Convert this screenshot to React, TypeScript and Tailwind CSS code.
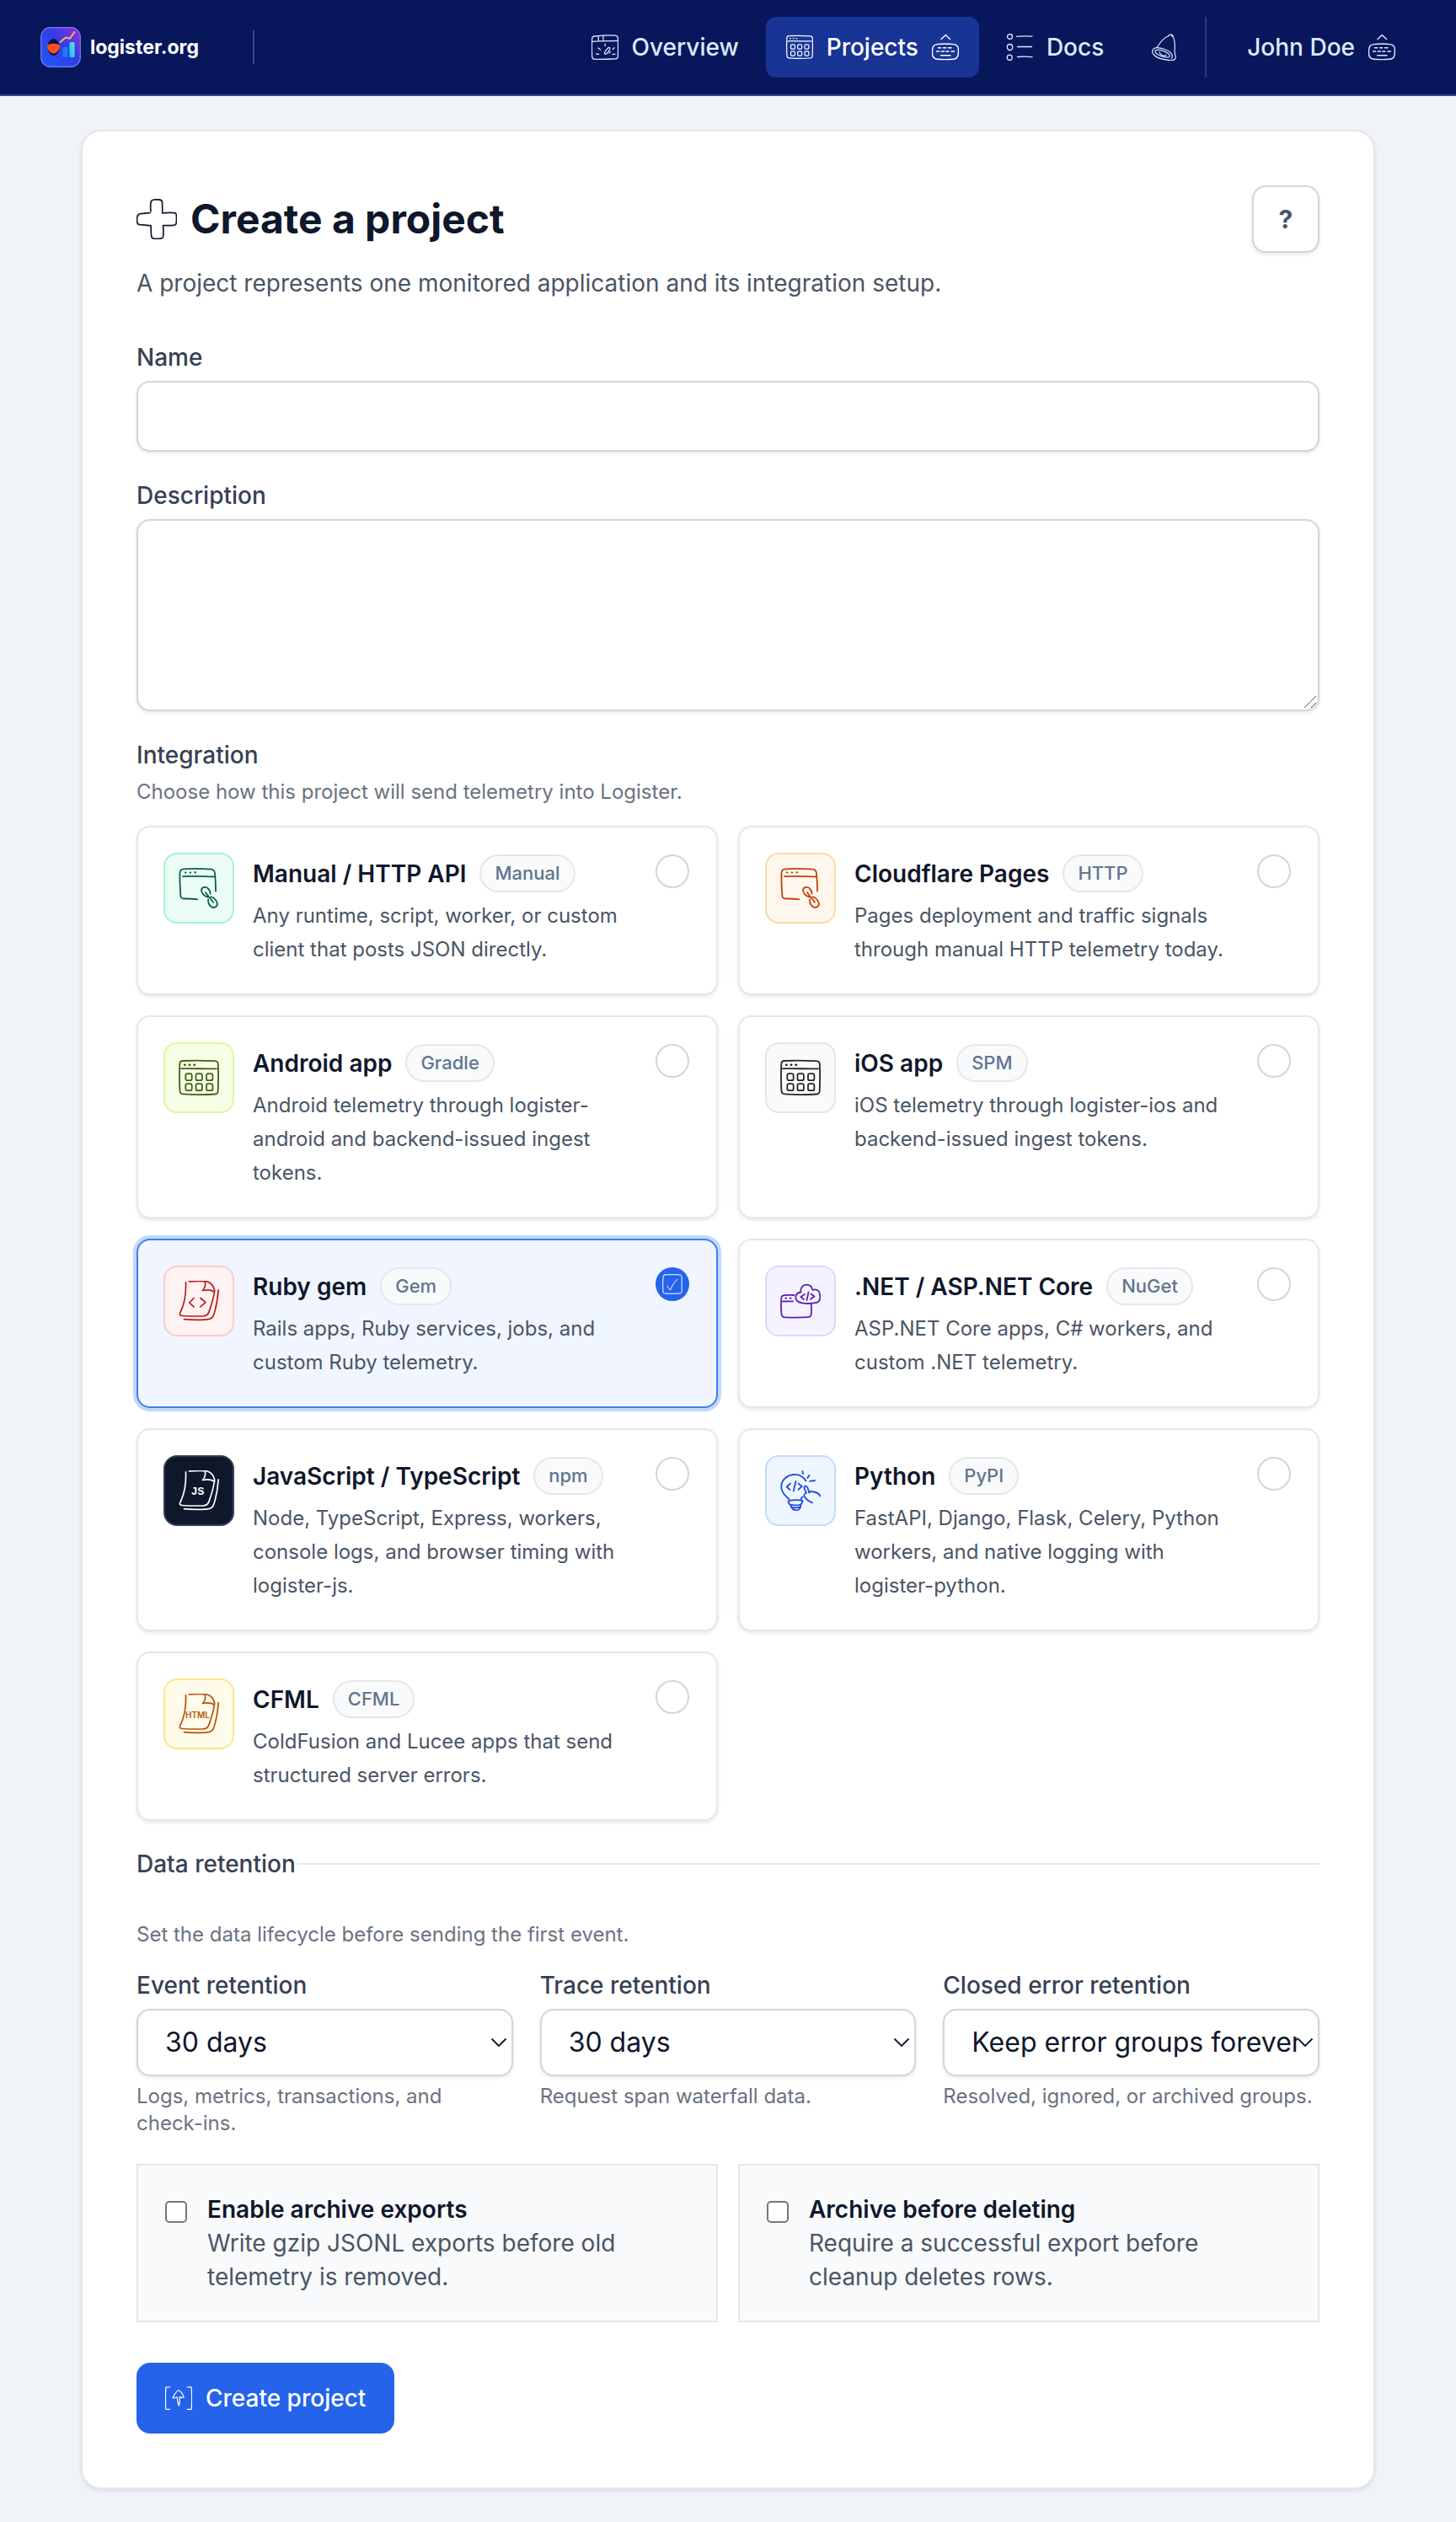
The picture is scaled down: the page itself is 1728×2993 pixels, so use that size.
// New project page: top navigation + project form

import { useState } from 'react';
import type { ReactNode } from 'react';

type IconProps = { className?: string };

// --- Icons (hand-drawn line set) ---

const Icon = ({ box, width, className, children }: {
  box: number;
  width: number;
  className?: string;
  children: ReactNode;
}) => (
  <svg
    viewBox={`0 0 ${box} ${box}`}
    fill="none"
    stroke="currentColor"
    strokeWidth={width}
    strokeLinecap="round"
    strokeLinejoin="round"
    className={className}
    aria-hidden="true"
  >
    {children}
  </svg>
);

const OverviewIcon = ({ className }: IconProps) => (
  <Icon box={32} width={1.3} className={className}>
    <path d="M3 3C12 2 21 1.3 28.5 2.2c2 .3 2.7 1.2 2.8 3 .3 7.5.3 15 0 22-.1 1.8-.9 2.5-2.7 2.6C20 30.1 11 30.6 4 30.3 1.8 30.2.8 29.3.7 27.2.3 20 .4 12 .6 6 .7 4.200 1.300 3.200 3 3z" />
    <path d="M.8 9.300C11 8.300 21 8.800 31 8.400M8.200 3v6M14.200 2.500c-.6 2-.6 4 0 6" />
    <path d="M8 17l2.700 2M16 12.200l.3 2.300M25.300 18.500l1.700-1.800M5.700 24l3 .3M25 24.300h3M21 22.800l1.500-1" />
    <ellipse cx="18.700" cy="20.300" rx="1.700" ry="4.600" transform="rotate(36 18.700 20.300)" />
  </Icon>
);

const AppGridIcon = ({ className }: IconProps) => (
  <Icon box={48} width={1.800} className={className}>
    <path d="M4 4c13-.6 26-.4 39 .2 2.300.2 3.700 1 3.800 3.500.6 11 .3 22-.1 32-.1 2.600-1.200 3.600-3.600 3.800-13 1-26 .9-38-.1-2.500-.2-3.400-1.200-3.600-3.700C.7 29 .9 18 1.300 8 1.400 5.300 2 4.200 4 4z" />
    <path d="M3 13.200c14-.5 28 .5 42 .1" />
    <path d="M7 8.700h.6M12.700 8.700h.6M18.400 8.700h.6" strokeWidth="2.400" />
    <rect x="8.300" y="19.200" width="7.400" height="8" rx="2" />
    <rect x="20.500" y="19.200" width="7.400" height="8" rx="2" />
    <rect x="33" y="19.200" width="7.400" height="8" rx="2" />
    <rect x="8.300" y="31.200" width="7.400" height="8" rx="2" />
    <rect x="20.500" y="31.200" width="7.400" height="8" rx="2" />
    <rect x="33" y="31.200" width="7.400" height="8" rx="2" />
  </Icon>
);

const KeyboardIcon = ({ className }: IconProps) => (
  <Icon box={32} width={1.400} className={className}>
    <path d="M11 6.600l5.300-5.100 5.300 5.100" />
    <path d="M6 12.600c6.700-.7 13.500-.7 20 0 3.500.5 5.300 2.300 5.400 6 0 1.600 0 3.400-.1 5-.3 4.400-1.900 6.300-6 6.600-6.300.5-12.700.5-18.700 0C2.300 29.800.8 28.200.6 24.400c-.1-1.800-.1-3.700 0-5.500.2-3.700 1.700-5.800 5.400-6.300z" />
    <path d="M7.500 16.700h3.200M13.500 16.700h3.200M19.500 16.700h3.500M5.500 21h3M11 21h3.500M16.700 21h3.200M23 21h3.500M10.500 25.700h11.500" />
  </Icon>
);

const DocsIcon = ({ className }: IconProps) => (
  <Icon box={32} width={1.300} className={className}>
    <ellipse cx="4.500" cy="3.500" rx="3" ry="2.900" />
    <ellipse cx="4.500" cy="16" rx="3.200" ry="3.500" />
    <ellipse cx="4.200" cy="28.300" rx="3" ry="3.200" />
    <path d="M12.500 3.300c6-.6 12-.4 18.500-.2M13.500 15.500h17M13.500 27.500c6-.5 12-.5 17.500.1" />
  </Icon>
);

const BellIcon = ({ className }: IconProps) => (
  <Icon box={32} width={1.200} className={className}>
    <path d="M20.500 3C13.500 5 10.500 11.500 7 16.500M26.300 3.500c2.500 4.500 2.200 11 1.800 17.500-.1 3 1.200 4.500 1.200 7.500-.6 2.300-2.500 3.300-6.300 3.200C15 31 6.500 28.500 3.300 25c-1.600-2-2.200-4.500-1-6.300" />
    <path d="M3 18c2-1.600 7.500-1.500 12.700.3 5.500 2 9.800 5 9.800 8.500-.1 1.200-.6 2-1.500 2.400" />
    <path d="M20.500 3c.5-2.300 5-2.800 5.800.5M23.800.9l1.400 2.300" />
    <ellipse cx="13.500" cy="23.500" rx="9.300" ry="3.300" transform="rotate(20 13.500 23.500)" />
    <path d="M10.500 21.500c-1 3 4.500 6 7.500 3.700" />
  </Icon>
);

const PlusIcon = ({ className }: IconProps) => (
  <Icon box={48} width={1.700} className={className}>
    <path d="M17 14.800c-.5-3.800-.4-7.600 0-10.600C17.300 2 18.500 1.200 20.500 1c2.500-.3 5-.3 7.500.1 1.600.4 2.400 1.300 2.500 3.200.3 4 .3 8 .2 12.500 4.800-.5 9.300-.8 14.200-.2 1.700.2 2.400 1.200 2.500 2.900.2 3 .1 6.200-.2 9.200-.2 1.800-1.300 2.600-3 2.700-4.200.2-8.300.3-12.700.1.600 4.500.5 8.500.2 12.500-.2 2-1.200 3-3 3.100-2.800.2-5.500.2-8.200 0-2-.2-2.700-1.200-2.900-3.200-.3-4-.6-8-.5-12C13 31.500 8.500 31 4 30.600 1.900 30.300.8 29.300.7 27.300c-.2-2-.1-4 .2-6 .3-2.300 1.500-3.300 3.800-3.600 3.800-.5 7.600-.8 11.300-1" />
  </Icon>
);

const WindowLinkIcon = ({ className }: IconProps) => (
  <Icon box={48} width={1.800} className={className}>
    <path d="M44 27.500c.1-7-.3-14-1-21-.3-3.200-1.300-4.500-4.500-4.800C27.500.8 16.500.7 6 1.300 2.500 1.500 1.600 3 1.500 6c-.3 9 .2 18 .9 27 .2 2.600 1.200 3.500 3.900 3.500 5.500-.1 11 .1 16 .8" />
    <path d="M5 10.200c12.500-.7 25 0 38 .1" />
    <path d="M8 5.500h.4M13.700 5.500h.4M19.500 5.300h.4" strokeWidth="2.200" />
    <path d="M34.500 34.500c-3.500-.5-7.500-4.500-7.500-8.200.3-3.500 5.500-4.800 8-1.800 2 2 2.700 4.300 2.600 6.300M32 29.200c3 4 6 7.500 9 11.600M38.500 34.400c3.500.4 7.300 5 7.400 8.400-.1 4-4.800 5.500-8 2.700-2-2-3.300-5-2.700-8" />
  </Icon>
);

// Two stacked sheets; children draw the mark on the front one
const SheetsIcon = ({ className, children }: { className?: string; children: ReactNode }) => (
  <Icon box={48} width={1.700} className={className}>
    <path d="M8.500 1.800C9 15 7 27.500 2 37.500.8 40.300 1.300 41.300 4 41.500c8.500.6 17 .6 25.500.4 3.500-.2 5.300-1.600 6.500-5C39 28.500 41.700 20 42.700 11.500c-1-5-4.400-9.500-9.700-10.800C26.500.2 19.500.4 12.500.8" />
    <path d="M31 1c1.500 3.500 0 7.500-2.500 10.500 4.500-.8 9.500-1.500 13.500 1.500" />
    <path d="M47.200 10.800C46.500 20.500 45 30 42 39.500c-1.200 4-3.500 6-7.500 6.300-9.500.8-19 .9-28-.2" />
    {children}
  </Icon>
);

const CodeSheetIcon = ({ className }: IconProps) => (
  <SheetsIcon className={className}>
    <path d="M18 20.500L12.800 26l5.200 4.800M26 20.500l6 5.200-6.300 5.100" />
  </SheetsIcon>
);

const JsSheetIcon = ({ className }: IconProps) => (
  <SheetsIcon className={className}>
    <text x="22.500" y="29" textAnchor="middle" fontSize="13" fontFamily="'Liberation Mono', monospace" fontWeight="700" fill="currentColor" stroke="none">JS</text>
  </SheetsIcon>
);

const HtmlSheetIcon = ({ className }: IconProps) => (
  <SheetsIcon className={className}>
    <text x="22.500" y="29" textAnchor="middle" fontSize="10" fontFamily="Inter, sans-serif" fontWeight="600" fill="currentColor" stroke="none">HTML</text>
  </SheetsIcon>
);

const CloudCodeIcon = ({ className }: IconProps) => (
  <Icon box={48} width={1.800} className={className}>
    <path d="M16.500 17c-4-.3-8-.2-12 .1-2.200.3-3 1.400-3.200 3.500-.5 6-.3 12.500.1 18.500.2 2.900 1.500 4.200 4.500 4.300 9 .4 18.500.4 27-.2 3-.2 3.900-1.700 4-4.500.2-4 .1-7.800-.2-11.500M3 24.500c4-.2 8-.3 12-.1" />
    <path d="M6.500 20.700h.4M12 20.700h.4" strokeWidth="2.200" />
    <path d="M24.500 13.500C23.500 8.500 27 4.600 31.500 4.700c4 .2 6.300 2.700 6.700 6.300 4.500-2 9 1 8.600 5.500 1.500 4.500-.3 9-5 9.700-5.500 1-11 1-16 .2-6.500-1-8.800-5.500-6.700-9.800 1-2 3-3 5.400-3.100z" />
    <path d="M29 16l-4.500 3 3.500 3.200M33.500 13.500l-2 9.500M36.500 15.500l4 3-4.500 3.300" />
  </Icon>
);

const BulbCodeIcon = ({ className }: IconProps) => (
  <Icon box={48} width={1.800} className={className}>
    <path d="M30.500 12.500C27 7 21.500 4.400 15.500 5 7 6 1 12 1.300 20.500 1.700 26 6 30 10.800 34.500M24.500 34.500c.5-1 1-2 2-3" />
    <path d="M9.500 36.500c5.500-1.700 12-1.700 17.300-.4M9.500 37c.5 2.500 1.500 3.500 3 4 4 .8 8 .5 11.500-.5 1.500-.7 2.200-2 2.700-4.200M12.500 41.500c.3 3.500 3.500 5.800 6.500 5.800 3 0 5-2.500 5.500-6M13 44c3.500.5 7 .4 10-.6" />
    <path d="M12 15.500l-4.300 4 3.800 3.500M18.500 13l-2.700 11.500M21.500 15.500l4.200 3.500-4.200 3.700" />
    <path d="M26.300 1l.8 3M34.500 5.700l-2.200 3.300M41 12l-6 .8" />
    <path d="M39.500 25.500c-3-1-4.500-.8-5.500 1C33.500 22.500 32 18.500 29.500 18.700c-2 .5-1 3.500 1.500 8.300-3 .8-3.500 2.500-1.500 5 1.500 3 4 4.500 8.500 6.300M39.500 25.500c4 .2 6.500 2 8 5" />
  </Icon>
);

const CheckBoxIcon = ({ className }: IconProps) => (
  <Icon box={24} width={1} className={className}>
    <path d="M2.500 1c6-.5 13-.5 19 0 1 .1 1.400.8 1.500 2 .3 6 .3 12 0 18-.1 1.300-.6 1.900-1.800 2-6.200.4-12.400.4-18.400 0C1.500 22.900 1 22.300 1 21 .6 15 .6 9 1 3c.1-1.300.5-1.900 1.500-2z" />
    <path d="M6 14c1 2 2.200 4 3.500 5C11.500 14 14.500 9.500 18 6" />
  </Icon>
);

const UploadIcon = ({ className }: IconProps) => (
  <Icon box={32} width={1.200} className={className}>
    <path d="M6 3C4.300 2.800 2.500 2.800.8 3.200.4 12 .4 20.500.7 29.200c1.700.3 3.500.3 5 .1M26.200 3c1.700-.2 3.300-.1 5 .2.500 8.700.5 17.500.1 26-1.700.3-3.500.3-5.100.1" />
    <path d="M14.300 14.800c-2 1-4.300 1.200-5.300.6C11 11.500 13 8 16 6.500c3.200 1.700 5 5 6.200 8.500-1.700.6-3.500.4-5-.4.500 3.700.3 7-.7 10.400-1.700-3-2.200-6.500-2.200-10.200z" />
  </Icon>
);

const LogoMark = ({ className }: IconProps) => (
  <svg viewBox="0 0 48 48" className={className} aria-hidden="true">
    <defs>
      <linearGradient id="logo-bg" x1="0" y1="1" x2="1" y2="0">
        <stop offset="0" stopColor="#1e5bff" />
        <stop offset=".55" stopColor="#2f3fe6" />
        <stop offset="1" stopColor="#9a2be0" />
      </linearGradient>
      <linearGradient id="logo-bar" x1="0" y1="1" x2="1" y2="0">
        <stop offset="0" stopColor="#22b8f5" />
        <stop offset="1" stopColor="#4ff0cf" />
      </linearGradient>
    </defs>
    <rect x=".7" y=".7" width="46.600" height="46.600" rx="11" fill="url(#logo-bg)" stroke="#6f7fe8" strokeWidth="1.200" />
    <ellipse cx="15.500" cy="24" rx="7" ry="10" fill="#0b1040" />
    <path d="M8 21.500c4-2.300 11-2.300 15 0 .4 4.500-2.500 9-7.500 10.300C10.500 30.500 7.600 26 8 21.500z" fill="#fb4f1c" />
    <path d="M23.500 18l6.500-5.500 5 1.200L40.500 6" fill="none" stroke="#ffb35c" strokeWidth="2" strokeLinejoin="round" strokeLinecap="round" />
    <rect x="26.500" y="24" width="6" height="12" rx="1" fill="#1a7dfb" />
    <rect x="34.500" y="18" width="6" height="18" rx="1" fill="url(#logo-bar)" />
  </svg>
);

// --- Data ---

const INTEGRATIONS = [
  {
    id: 'manual',
    name: 'Manual / HTTP API',
    badge: 'Manual',
    description: 'Any runtime, script, worker, or custom client that posts JSON directly.',
    icon: WindowLinkIcon,
    tile: 'bg-[#ecfdf5] border-[#a7f3d0] text-[#065f46]',
  },
  {
    id: 'cloudflare',
    name: 'Cloudflare Pages',
    badge: 'HTTP',
    description: 'Pages deployment and traffic signals through manual HTTP telemetry today.',
    icon: WindowLinkIcon,
    tile: 'bg-[#fff7ed] border-[#fed7aa] text-[#c2410c]',
  },
  {
    id: 'android',
    name: 'Android app',
    badge: 'Gradle',
    description: 'Android telemetry through logister-android and backend-issued ingest tokens.',
    icon: AppGridIcon,
    tile: 'bg-[#f7fee7] border-[#d9f99d] text-[#3f6212]',
  },
  {
    id: 'ios',
    name: 'iOS app',
    badge: 'SPM',
    description: 'iOS telemetry through logister-ios and backend-issued ingest tokens.',
    icon: AppGridIcon,
    tile: 'bg-[#fafafa] border-[#e5e5e5] text-[#262626]',
  },
  {
    id: 'ruby',
    name: 'Ruby gem',
    badge: 'Gem',
    description: 'Rails apps, Ruby services, jobs, and custom Ruby telemetry.',
    icon: CodeSheetIcon,
    tile: 'bg-[#fef2f2] border-[#fecaca] text-[#b91c1c]',
  },
  {
    id: 'dotnet',
    name: '.NET / ASP.NET Core',
    badge: 'NuGet',
    description: 'ASP.NET Core apps, C# workers, and custom .NET telemetry.',
    icon: CloudCodeIcon,
    tile: 'bg-[#f5f3ff] border-[#ddd6fe] text-[#5b21b6]',
  },
  {
    id: 'javascript',
    name: 'JavaScript / TypeScript',
    badge: 'npm',
    description: 'Node, TypeScript, Express, workers, console logs, and browser timing with logister-js.',
    icon: JsSheetIcon,
    tile: 'bg-[#0f172a] border-[#334155] text-white',
  },
  {
    id: 'python',
    name: 'Python',
    badge: 'PyPI',
    description: 'FastAPI, Django, Flask, Celery, Python workers, and native logging with logister-python.',
    icon: BulbCodeIcon,
    tile: 'bg-[#eff6ff] border-[#bfdbfe] text-[#1d4ed8]',
  },
  {
    id: 'cfml',
    name: 'CFML',
    badge: 'CFML',
    description: 'ColdFusion and Lucee apps that send structured server errors.',
    icon: HtmlSheetIcon,
    tile: 'bg-[#fffbeb] border-[#fde68a] text-[#b45309]',
  },
];

const RETENTION_FIELDS = [
  { id: 'event', label: 'Event retention', value: '30 days', hint: 'Logs, metrics, transactions, and check-ins.' },
  { id: 'trace', label: 'Trace retention', value: '30 days', hint: 'Request span waterfall data.' },
  { id: 'closed', label: 'Closed error retention', value: 'Keep error groups forever', hint: 'Resolved, ignored, or archived groups.' },
];

const ARCHIVE_OPTIONS = [
  { id: 'exports', label: 'Enable archive exports', description: 'Write gzip JSONL exports before old telemetry is removed.' },
  { id: 'before-delete', label: 'Archive before deleting', description: 'Require a successful export before cleanup deletes rows.' },
];

// --- Sections ---

const TopNav = () => (
  <header className="flex items-center border-b-2 border-[#2c4290] bg-[#08175c] px-12 py-5 text-[28px] leading-10 font-medium text-[#dbeafe]">
    <a href="#home" className="flex items-center gap-[11px] text-[23px] leading-8 font-bold text-white">
      <LogoMark className="size-12" />
      logister.org
    </a>
    <span className="ml-16 h-10 w-0.5 bg-[#3c4a86]" />
    <nav className="ml-auto flex items-center gap-2">
      <a href="#overview" className="flex h-[72px] items-center gap-4 rounded-xl px-6">
        <OverviewIcon className="size-8" />
        Overview
      </a>
      <button type="button" className="flex h-[72px] items-center gap-4 rounded-xl bg-[#183494] px-6 text-white">
        <AppGridIcon className="size-8" />
        Projects
        <KeyboardIcon className="size-8" />
      </button>
      <a href="#docs" className="flex h-[72px] items-center gap-4 rounded-xl px-6">
        <DocsIcon className="size-8" />
        Docs
      </a>
      <button type="button" aria-label="Notifications" className="flex h-[72px] items-center rounded-xl px-6">
        <BellIcon className="size-8" />
      </button>
      <div className="border-l-2 border-[#2b3b7f] pl-6">
        <button type="button" className="flex h-[72px] items-center gap-4 rounded-xl px-6">
          John Doe
          <KeyboardIcon className="size-8" />
        </button>
      </div>
    </nav>
  </header>
);

const IntegrationCard = ({ item, selected, onSelect }: {
  item: (typeof INTEGRATIONS)[number];
  selected: boolean;
  onSelect: () => void;
}) => (
  <label
    className={`flex cursor-pointer items-start gap-[22px] rounded-2xl border-2 pt-[30px] pr-8 pb-8 pl-[30px] ${
      selected
        ? 'border-[#4080ea] bg-[#f0f5ff] ring-4 ring-[#c1d8fd]'
        : 'border-gray-200 bg-white shadow-[0_2px_4px_rgba(15,23,42,0.1)]'
    }`}
  >
    <input
      type="radio"
      name="integration"
      value={item.id}
      checked={selected}
      onChange={onSelect}
      className="sr-only"
    />
    <span className={`flex size-[84px] shrink-0 items-center justify-center rounded-2xl border-2 ${item.tile}`}>
      <item.icon className="size-12" />
    </span>
    <span className="min-w-0 flex-1 pt-0.5">
      <span className="flex items-center gap-4">
        <span className="text-[28px] leading-10 font-semibold text-slate-900">{item.name}</span>
        <span className="rounded-full border-2 border-gray-200 bg-slate-50 px-4 text-[22px] leading-[41px] font-medium text-slate-500">
          {item.badge}
        </span>
      </span>
      <span className="mt-2 block text-[24px] leading-10 text-gray-600">{item.description}</span>
    </span>
    <span
      className={`mt-0.5 flex size-10 shrink-0 items-center justify-center rounded-full ${
        selected ? 'bg-[#2563eb] text-white' : 'border-2 border-gray-300 bg-white'
      }`}
    >
      {selected && <CheckBoxIcon className="size-6" />}
    </span>
  </label>
);

const fieldClass =
  'block w-full rounded-2xl border-2 border-gray-300 bg-white px-7 text-[32px] text-slate-900 shadow-[0_2px_4px_rgba(15,23,42,0.1)]';
const labelClass = 'block text-[28px] leading-10 font-medium text-gray-700';
const hintClass = 'text-[24px] leading-8 text-gray-500';

const App = () => {
  const [integration, setIntegration] = useState('ruby');

  return (
    <div className="min-h-screen bg-[#f0f4f8] font-[Inter,sans-serif]">
      <TopNav />

      <main className="px-24 py-10">
        <form
          onSubmit={(e) => e.preventDefault()}
          className="rounded-3xl border-2 border-gray-200 bg-white p-16 shadow-[0_2px_4px_rgba(15,23,42,0.1)]"
        >
          <div className="flex items-center justify-between">
            <h1 className="flex items-center gap-4 text-[48px] leading-[60px] font-bold text-slate-900">
              <PlusIcon className="size-12" />
              Create a project
            </h1>
            <button
              type="button"
              aria-label="Help"
              className="size-20 rounded-2xl border-2 border-gray-300 bg-white text-[30px] font-bold text-slate-600 shadow-[0_2px_4px_rgba(15,23,42,0.1)]"
            >
              ?
            </button>
          </div>
          <p className="mt-4 text-[28px] leading-10 text-gray-600">
            A project represents one monitored application and its integration setup.
          </p>

          <div className="mt-12">
            <label htmlFor="name" className={labelClass}>Name</label>
            <input id="name" type="text" className={`mt-2 h-[84px] ${fieldClass}`} />
          </div>

          <div className="mt-8">
            <label htmlFor="description" className={labelClass}>Description</label>
            <div className="relative mt-2">
              <textarea id="description" className={`h-[228px] resize-none ${fieldClass}`} />
              {/* resize grip */}
              <svg
                viewBox="0 0 16 16"
                fill="none"
                stroke="#555"
                strokeWidth="1"
                className="pointer-events-none absolute right-[3px] bottom-[3px] size-4"
                aria-hidden="true"
              >
                <path d="M1 15L15 1M9 15l6-6" />
              </svg>
            </div>
          </div>

          <fieldset className="mt-8">
            <legend className={labelClass}>Integration</legend>
            <p className={`mt-2 ${hintClass}`}>Choose how this project will send telemetry into Logister.</p>
            <div className="mt-6 grid grid-cols-2 gap-6">
              {INTEGRATIONS.map((item) => (
                <IntegrationCard
                  key={item.id}
                  item={item}
                  selected={item.id === integration}
                  onSelect={() => setIntegration(item.id)}
                />
              ))}
            </div>
          </fieldset>

          <fieldset className="mt-[31px] border-t-2 border-gray-200">
            <legend className={`pr-0.5 ${labelClass}`}>Data retention</legend>
            <p className={`mt-12 ${hintClass}`}>Set the data lifecycle before sending the first event.</p>

            <div className="mt-6 grid grid-cols-3 gap-8">
              {RETENTION_FIELDS.map((field) => (
                <div key={field.id}>
                  <label htmlFor={field.id} className={labelClass}>{field.label}</label>
                  <div className="relative mt-2">
                    <select
                      id={field.id}
                      className="block h-20 w-full appearance-none rounded-2xl border-2 border-gray-300 bg-white pr-6 pl-8 text-[32px] text-slate-900 shadow-[0_2px_4px_rgba(15,23,42,0.1)]"
                    >
                      <option>{field.value}</option>
                    </select>
                    <svg
                      viewBox="0 0 20 12"
                      fill="none"
                      stroke="currentColor"
                      strokeWidth="1.800"
                      className="pointer-events-none absolute top-[34px] right-[7px] h-3 w-5 text-slate-900"
                      aria-hidden="true"
                    >
                      <path d="M1.500 1.500L10 10l8.500-8.500" />
                    </svg>
                  </div>
                  <p className={`mt-2 ${hintClass}`}>{field.hint}</p>
                </div>
              ))}
            </div>

            <div className="mt-8 grid grid-cols-2 gap-6">
              {ARCHIVE_OPTIONS.map((option) => (
                <label key={option.id} className="flex items-start gap-6 border-2 border-gray-200 bg-slate-50 p-8">
                  <input
                    type="checkbox"
                    className="mt-[10px] size-[26px] shrink-0 appearance-none rounded-[5px] border-2 border-[#767676] bg-white checked:bg-[#2563eb]"
                  />
                  <span className="text-[28px] leading-10">
                    <span className="block font-semibold text-slate-900">{option.label}</span>
                    <span className="block text-gray-600">{option.description}</span>
                  </span>
                </label>
              ))}
            </div>
          </fieldset>

          <button
            type="submit"
            className="mt-12 flex h-[84px] items-center gap-4 rounded-2xl bg-[#2563eb] px-[34px] text-[28px] font-medium text-white"
          >
            <UploadIcon className="size-8" />
            Create project
          </button>
        </form>
      </main>
    </div>
  );
};

export default App;
